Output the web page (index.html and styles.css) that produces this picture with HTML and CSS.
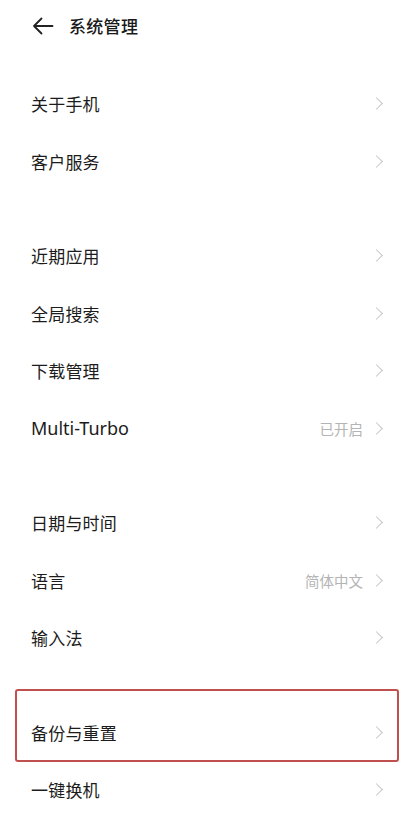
FILE: index.html
```html
<!DOCTYPE html>
<html lang="zh">
<head>
<meta charset="utf-8">
<link rel="stylesheet" href="styles.css">
</head>
<body>
<header class="topbar">
  <svg class="back" width="22" height="18" viewBox="0 0 22 18"><path d="M20.5 9H2M9.5 1.5L2 9l7.5 7.5" fill="none" stroke="#222" stroke-width="1.8" stroke-linecap="round" stroke-linejoin="round"/></svg>
  <h1 class="title">系统管理</h1>
</header>
<main class="list">
  <section class="group">
    <div class="row"><span class="label">关于手机</span><span class="chev"></span></div>
    <div class="row"><span class="label">客户服务</span><span class="chev"></span></div>
  </section>
  <section class="group">
    <div class="row"><span class="label">近期应用</span><span class="chev"></span></div>
    <div class="row"><span class="label">全局搜索</span><span class="chev"></span></div>
    <div class="row"><span class="label">下载管理</span><span class="chev"></span></div>
    <div class="row"><span class="label latin">Multi-Turbo</span><span class="value">已开启</span><span class="chev"></span></div>
  </section>
  <section class="group">
    <div class="row"><span class="label">日期与时间</span><span class="chev"></span></div>
    <div class="row"><span class="label">语言</span><span class="value">简体中文</span><span class="chev"></span></div>
    <div class="row"><span class="label">输入法</span><span class="chev"></span></div>
  </section>
  <section class="group">
    <div class="row marked"><span class="label">备份与重置</span><span class="chev"></span><span class="mark"></span></div>
    <div class="row"><span class="label">一键换机</span><span class="chev"></span></div>
  </section>
</main>
</body>
</html>
```
FILE: styles.css
```css
* { box-sizing: border-box; }
html, body { margin: 0; padding: 0; background: #fff; }
body {
  width: 411px;
  height: 815px;
  overflow: hidden;
  font-family: "Noto Sans CJK SC", "Noto Sans", sans-serif;
  color: #1c1c1c;
}
.topbar {
  height: 50px;
  display: flex;
  align-items: center;
  padding-left: 32px;
  gap: 15px;
}
.back { display: block; margin-top: 1px; }
.title {
  margin: 0;
  font-size: 17px;
  font-weight: 500;
  letter-spacing: 0.3px;
  color: #1a1a1a;
}
.list { padding-top: 25px; }
.group { margin-bottom: 37px; }
.group:last-child { margin-bottom: 0; }
.row {
  position: relative;
  height: 57.5px;
  display: flex;
  align-items: center;
  padding-left: 31px;
  padding-right: 28px;
}
.label {
  flex: 1;
  font-size: 17px;
  letter-spacing: 0.2px;
  color: #1c1c1c;
}
.label.latin { font-family: "Noto Sans", sans-serif; font-size: 18px; letter-spacing: 0; }
.value {
  font-size: 14.5px;
  color: #b4b4b4;
  margin-right: 9px;
}
.chev {
  width: 9px;
  height: 9px;
  border-top: 1.4px solid #c6c6c6;
  border-right: 1.4px solid #c6c6c6;
  transform: rotate(45deg);
  margin-right: 2px;
}
.mark {
  position: absolute;
  left: 15px;
  right: 12px;
  top: -15px;
  bottom: -1px;
  border: 2px solid #c0504d;
  border-radius: 3px;
}
```
